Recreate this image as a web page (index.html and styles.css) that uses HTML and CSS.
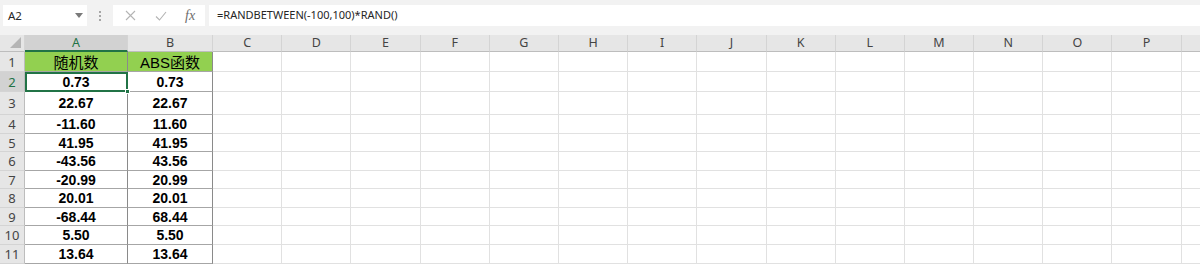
FILE: index.html
```html
<!DOCTYPE html>
<html lang="zh-CN">
<head>
    <meta charset="UTF-8">
    <title>ABS函数</title>
    <link rel="stylesheet" href="styles.css">
</head>
<body>
    <div class="toolbar">
        <div class="name-box">
            <span>A2</span>
            <svg class="caret" width="8" height="5" viewBox="0 0 8 5"><path d="M0 0h8L4 5z" fill="#7a7a7a"/></svg>
        </div>
        <div class="grip"><i></i><i></i><i></i></div>
        <div class="fx-buttons">
            <svg width="11" height="11" viewBox="0 0 11 11"><path d="M1 1l9 9M10 1l-9 9" stroke="#b4b4b4" stroke-width="1.1" fill="none"/></svg>
            <svg width="12" height="10" viewBox="0 0 12 10"><path d="M1 5.5l3.5 3.5L11 1" stroke="#b4b4b4" stroke-width="1.1" fill="none"/></svg>
            <span class="fx">fx</span>
        </div>
        <div class="formula">=RANDBETWEEN(-100,100)*RAND()</div>
    </div>

    <div class="sheet" id="sheet">
        <div class="corner"></div>
        <div class="col-head active">A</div>
        <div class="col-head">B</div>
    </div>

    <script>
        const sheet = document.getElementById('sheet');
        // last column only peeks in at the right edge, so no letter
        const letters = ['C', 'D', 'E', 'F', 'G', 'H', 'I', 'J', 'K', 'L', 'M', 'N', 'O', 'P', ''];
        const data = [
            ['随机数', 'ABS函数'],
            ['0.73', '0.73'],
            ['22.67', '22.67'],
            ['-11.60', '11.60'],
            ['41.95', '41.95'],
            ['-43.56', '43.56'],
            ['-20.99', '20.99'],
            ['20.01', '20.01'],
            ['-68.44', '68.44'],
            ['5.50', '5.50'],
            ['13.64', '13.64']
        ];

        function cell(cls, text) {
            const div = document.createElement('div');
            div.className = cls;
            if (text) div.textContent = text;
            sheet.appendChild(div);
            return div;
        }

        letters.forEach(l => cell('col-head', l));

        data.forEach((row, i) => {
            const n = i + 1;
            cell(n === 2 ? 'row-head active' : 'row-head', String(n));
            if (n === 1) {
                cell('cell title', row[0]);
                cell('cell title', row[1]);
            } else {
                const a = cell(n === 2 ? 'cell value selected' : 'cell value', row[0]);
                if (n === 2) {
                    const handle = document.createElement('span');
                    handle.className = 'fill-handle';
                    a.appendChild(handle);
                }
                cell('cell value', row[1]);
            }
            letters.forEach(() => cell('cell'));
        });
    </script>
</body>
</html>
```

FILE: styles.css
```css
* {
    margin: 0;
    padding: 0;
    box-sizing: border-box;
}

body {
    width: 1200px;
    height: 265px;
    overflow: hidden;
    background: #ffffff;
    font-family: "Liberation Sans", "Noto Sans CJK SC", sans-serif;
}

.toolbar {
    height: 35px;
    display: flex;
    align-items: flex-start;
    padding: 5px 0 0 3px;
    background: #f2f2f2;
}

.name-box {
    width: 84px;
    height: 21px;
    background: #ffffff;
    display: flex;
    align-items: center;
    justify-content: space-between;
    padding: 0 4px 0 5px;
    font-family: "Noto Sans", sans-serif;
    font-size: 11.5px;
    color: #262626;
}

.grip {
    width: 26px;
    height: 21px;
    display: flex;
    flex-direction: column;
    align-items: center;
    justify-content: center;
    gap: 2px;
}

.grip i {
    width: 2px;
    height: 2px;
    background: #a6a6a6;
}

.fx-buttons {
    width: 92px;
    height: 21px;
    background: #ffffff;
    display: flex;
    align-items: center;
    padding-left: 12px;
    gap: 19px;
}

.fx {
    font-family: "Liberation Serif", serif;
    font-style: italic;
    font-size: 14px;
    color: #6d6d6d;
    margin-left: -1px;
}

.formula {
    flex: 1;
    height: 21px;
    margin-left: 4px;
    background: #ffffff;
    padding-left: 8px;
    line-height: 20px;
    font-family: "Noto Sans", sans-serif;
    font-size: 11px;
    color: #262626;
}

.sheet {
    display: grid;
    grid-template-columns: 25px 103px 85px repeat(15, 69.2px);
    grid-template-rows: 17px 20px 20px 23px 19px 18px 19px 18px 19px 18px 19px 19px;
}

.corner {
    background: #e6e6e6;
    border-right: 1px solid #d4d4d4;
    border-bottom: 1px solid #bdbdbd;
    position: relative;
}

.corner::after {
    content: "";
    position: absolute;
    right: 3px;
    bottom: 3px;
    border-style: solid;
    border-width: 0 0 11px 11px;
    border-color: transparent transparent #b5b5b5 transparent;
}

.col-head {
    background: #e6e6e6;
    border-right: 1px solid #d4d4d4;
    border-bottom: 1px solid #bdbdbd;
    font-family: "Noto Sans", sans-serif;
    font-size: 12.5px;
    color: #444444;
    text-align: center;
    line-height: 16px;
}

.col-head.active {
    background: #d2d2d2;
    color: #217346;
    border-bottom: 2px solid #217346;
}

.row-head {
    background: #e6e6e6;
    border-right: 1px solid #bdbdbd;
    border-bottom: 1px solid #d4d4d4;
    font-family: "Noto Sans", sans-serif;
    font-size: 13px;
    color: #444444;
    display: flex;
    align-items: center;
    justify-content: center;
}

.row-head.active {
    background: #d2d2d2;
    color: #217346;
}

.cell {
    border-right: 1px solid #e1e1e1;
    border-bottom: 1px solid #e1e1e1;
}

.cell.title,
.cell.value {
    display: flex;
    align-items: center;
    justify-content: center;
    font-size: 14px;
    color: #000000;
    border-right: 1px solid #8a8a8a;
    border-bottom: 1px solid #a6a6a6;
}

.cell.title {
    background: #92d050;
    font-size: 15px;
}

.cell.value {
    font-weight: bold;
}

.cell.selected {
    position: relative;
    outline: 2px solid #217346;
    outline-offset: -2px;
}

.fill-handle {
    position: absolute;
    right: -3px;
    bottom: -3px;
    width: 5px;
    height: 5px;
    background: #217346;
    border: 1px solid #ffffff;
}
```
